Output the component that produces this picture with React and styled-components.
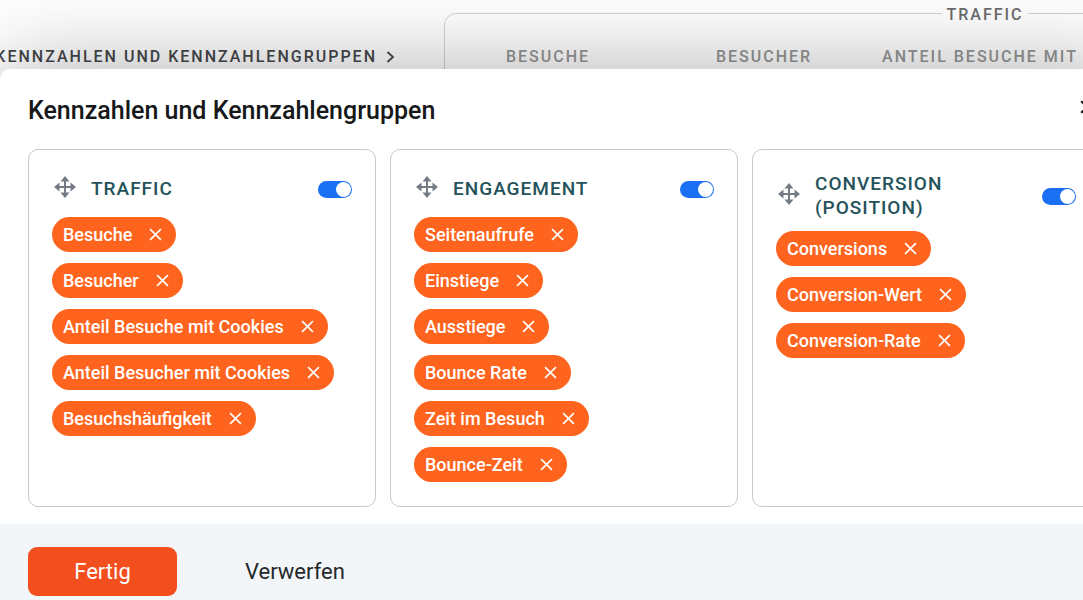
import React, { useState } from 'react';
import styled, { createGlobalStyle } from 'styled-components';

const GlobalStyle = createGlobalStyle`
  * {
    box-sizing: border-box;
  }
  body {
    margin: 0;
    background: #fff;
    color: #16181a;
    font-family: Roboto, 'Liberation Sans', sans-serif;
  }
  button {
    font-family: inherit;
    border: 0;
    cursor: pointer;
  }
  svg {
    flex: none;
  }
`;

const Page = styled.div`
  height: 100vh;
  overflow: hidden;
`;

const TableHead = styled.header`
  display: flex;
  height: 69px;
  padding-top: 3px;
  font-size: 16px;
  font-weight: 500;
  line-height: 18px;
  letter-spacing: 2px;
  text-transform: uppercase;
`;

const Breadcrumb = styled.div`
  flex: 0 0 444px;
  display: flex;
  justify-content: flex-end;
  align-items: center;
  gap: 9px;
  padding: 41px 49px 0 0;
  height: 66px;
  color: #45474b;
  white-space: nowrap;
  overflow: hidden;
`;

const ColumnGroup = styled.fieldset`
  flex: none;
  display: grid;
  grid-template-columns: repeat(5, 216px);
  height: 100px;
  margin: 0;
  padding: 24px 0 0;
  border: 1px solid #d2d2d2;
  border-radius: 12px;
  text-align: center;
`;

const GroupName = styled.legend`
  padding: 3px 4px 0;
  color: #6c6c6c;
`;

const ColumnName = styled.span`
  padding-right: 10px;
  color: #969696;
`;

const Panel = styled.section`
  position: relative;
  width: max-content;
  min-width: 100%;
  border-radius: 10px 0 0 0;
  background: #fff;
  box-shadow: 0 0 90px rgba(0, 0, 0, 0.32);
`;

const PanelHeader = styled.div`
  display: flex;
  justify-content: space-between;
  align-items: center;
  height: 80px;
  padding: 4px 28px 0;
`;

const PanelTitle = styled.h2`
  margin: 0;
  font-size: 25px;
  font-weight: 500;
  line-height: 32px;
`;

const CloseButton = styled.button`
  display: flex;
  padding: 0 6px 8px 0;
  background: none;
  color: #16181a;
`;

const Cards = styled.div`
  display: flex;
  gap: 14px;
  padding: 0 28px 17px;
`;

const Card = styled.article`
  flex: 0 0 348px;
  padding: 22px 23px 24px;
  border: 1px solid #c6c8ca;
  border-radius: 10px;
`;

const CardHead = styled.div`
  display: flex;
  align-items: center;
  min-height: 34px;
  margin-bottom: 11px;
`;

const DragHandle = styled.button`
  display: flex;
  margin: 0 15px 4px 2px;
  padding: 0;
  background: none;
  color: #747b85;
  cursor: move;
`;

const CardTitle = styled.label`
  flex: 1;
  max-width: 180px;
  color: #24525a;
  font-size: 19px;
  font-weight: 500;
  line-height: 24px;
  letter-spacing: 1px;
  text-transform: uppercase;
`;

const Toggle = styled.input`
  appearance: none;
  display: flex;
  align-items: center;
  width: 34px;
  height: 17px;
  margin: 0 0 0 auto;
  padding: 0 1px;
  border-radius: 9px;
  background: #a9b0b8;
  cursor: pointer;

  &::before {
    content: '';
    width: 15px;
    height: 15px;
    border-radius: 50%;
    background: #fff;
  }
  &:checked {
    justify-content: flex-end;
    background: #1a6ff2;
  }
`;

const ChipList = styled.ul`
  display: flex;
  flex-direction: column;
  align-items: flex-start;
  gap: 11px;
  margin: 0;
  padding: 0;
  list-style: none;
`;

const Chip = styled.li`
  display: flex;
  align-items: center;
  gap: 17px;
  height: 35px;
  padding: 0 14px 0 11px;
  border-radius: 18px;
  background: #ff641e;
  color: #fff;
  font-size: 18px;
  font-weight: 500;
`;

const ChipRemove = styled.button`
  display: flex;
  padding: 0;
  background: none;
  color: #fff;
`;

const PanelFooter = styled.footer`
  display: flex;
  align-items: center;
  gap: 24px;
  padding: 23px 28px;
  background: #f3f6f8;
`;

const Button = styled.button`
  min-width: 149px;
  height: 49px;
  padding: 0 44px;
  border-radius: 9px;
  background: ${(props) => (props.$primary ? '#f24e1e' : 'transparent')};
  color: ${(props) => (props.$primary ? '#fff' : '#25282b')};
  font-size: 22px;
`;

const initialGroups = [
  {
    id: 'traffic',
    name: 'Traffic',
    metrics: [
      'Besuche',
      'Besucher',
      'Anteil Besuche mit Cookies',
      'Anteil Besucher mit Cookies',
      'Besuchshäufigkeit',
    ],
  },
  {
    id: 'engagement',
    name: 'Engagement',
    metrics: [
      'Seitenaufrufe',
      'Einstiege',
      'Ausstiege',
      'Bounce Rate',
      'Zeit im Besuch',
      'Bounce-Zeit',
    ],
  },
  {
    id: 'conversion',
    name: 'Conversion (Position)',
    metrics: ['Conversions', 'Conversion-Wert', 'Conversion-Rate'],
  },
];

const CrossIcon = ({ size, stroke }) => (
  <svg width={size} height={size} viewBox="0 0 12 12" fill="none">
    <path d="M1 1l10 10M11 1L1 11" stroke="currentColor" strokeWidth={stroke} />
  </svg>
);

const MoveIcon = () => (
  <svg width="22" height="22" viewBox="0 0 22 22" fill="none">
    <path
      d="M11 3v16M3 11h16"
      stroke="currentColor"
      strokeWidth="2"
    />
    <path
      d="M11 0l4.5 5.5h-9zM11 22l4.5-5.5h-9zM0 11l5.5-4.5v9zM22 11l-5.5-4.5v9z"
      fill="currentColor"
    />
  </svg>
);

const MetricCard = ({ group, onRemove }) => (
  <Card>
    <CardHead>
      <DragHandle type="button" aria-label="Verschieben">
        <MoveIcon />
      </DragHandle>
      <CardTitle htmlFor={group.id}>{group.name}</CardTitle>
      <Toggle type="checkbox" id={group.id} defaultChecked />
    </CardHead>
    <ChipList>
      {group.metrics.map((metric) => (
        <Chip key={metric}>
          {metric}
          <ChipRemove
            type="button"
            aria-label={`${metric} entfernen`}
            onClick={() => onRemove(group.id, metric)}
          >
            <CrossIcon size={13} stroke={1.5} />
          </ChipRemove>
        </Chip>
      ))}
    </ChipList>
  </Card>
);

const App = () => {
  const [groups, setGroups] = useState(initialGroups);

  const removeMetric = (id, metric) => {
    setGroups(
      groups.map((group) =>
        group.id === id
          ? { ...group, metrics: group.metrics.filter((m) => m !== metric) }
          : group
      )
    );
  };

  return (
    <Page>
      <GlobalStyle />
      <TableHead>
        <Breadcrumb>
          Kennzahlen und Kennzahlengruppen
          <svg width="9" height="12" viewBox="0 0 9 12" fill="none">
            <path d="M1.5 1l5.5 5-5.5 5" stroke="currentColor" strokeWidth="1.8" />
          </svg>
        </Breadcrumb>
        <ColumnGroup>
          <GroupName>Traffic</GroupName>
          <ColumnName>Besuche</ColumnName>
          <ColumnName>Besucher</ColumnName>
          <ColumnName>Anteil Besuche mit</ColumnName>
        </ColumnGroup>
      </TableHead>
      <Panel>
        <PanelHeader>
          <PanelTitle>Kennzahlen und Kennzahlengruppen</PanelTitle>
          <CloseButton type="button" aria-label="Schließen">
            <CrossIcon size={14} stroke={1.8} />
          </CloseButton>
        </PanelHeader>
        <Cards>
          {groups.map((group) => (
            <MetricCard key={group.id} group={group} onRemove={removeMetric} />
          ))}
        </Cards>
        <PanelFooter>
          <Button type="button" $primary>
            Fertig
          </Button>
          <Button type="button" onClick={() => setGroups(initialGroups)}>
            Verwerfen
          </Button>
        </PanelFooter>
      </Panel>
    </Page>
  );
};

export default App;
